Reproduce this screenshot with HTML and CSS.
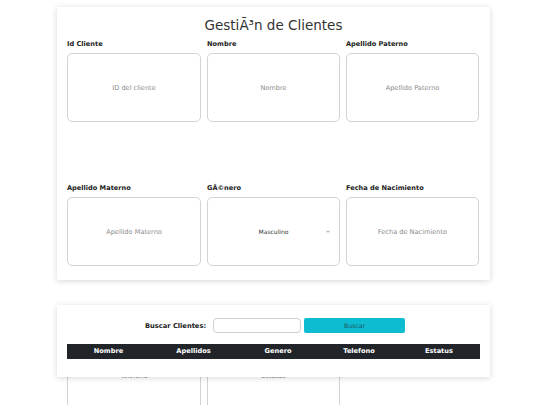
FILE: index.html
```html
<!DOCTYPE html>
<html lang="es">
<head>
<meta charset="utf-8">
<title>Gestión de Clientes</title>
<link rel="stylesheet" href="styles.css">
</head>
<body>
<div class="page">
  <section class="card form-card">
    <h1 class="title">GestiÃ³n de Clientes</h1>
    <div class="grid">
      <div class="field">
        <label class="label">Id Cliente</label>
        <div class="input"><span class="ph">ID del cliente</span></div>
      </div>
      <div class="field">
        <label class="label">Nombre</label>
        <div class="input"><span class="ph">Nombre</span></div>
      </div>
      <div class="field">
        <label class="label">Apellido Paterno</label>
        <div class="input"><span class="ph">Apellido Paterno</span></div>
      </div>
      <div class="field">
        <label class="label">Apellido Materno</label>
        <div class="input"><span class="ph">Apellido Materno</span></div>
      </div>
      <div class="field">
        <label class="label">GÃ©nero</label>
        <div class="input select"><span class="val">Masculino</span>
          <svg class="chev" viewBox="0 0 6 4" width="4" height="3"><path d="M0.6 0.8 L3 3.2 L5.4 0.8" fill="none" stroke="#666" stroke-width="1"/></svg>
        </div>
      </div>
      <div class="field">
        <label class="label">Fecha de Nacimiento</label>
        <div class="input"><span class="ph">Fecha de Nacimiento</span></div>
      </div>
      <div class="field">
        <label class="label">Telefono</label>
        <div class="input"><span class="ph">Telefono</span></div>
      </div>
      <div class="field">
        <label class="label">Estatus</label>
        <div class="input"><span class="ph">Estatus</span></div>
      </div>
    </div>
  </section>

  <section class="card search-card">
    <div class="search-row">
      <label class="search-label">Buscar Clientes:</label>
      <div class="search-input"></div>
      <button class="btn">Buscar</button>
    </div>
    <div class="thead">
      <div class="th">Nombre</div>
      <div class="th">Apellidos</div>
      <div class="th">Genero</div>
      <div class="th">Telefono</div>
      <div class="th">Estatus</div>
    </div>
  </section>
</div>
</body>
</html>
```

FILE: styles.css
```css
html, body {
  margin: 0;
  padding: 0;
  background: #ffffff;
  font-family: "DejaVu Sans", "Liberation Sans", sans-serif;
  color: #222;
}

.page {
  padding-top: 7px;
  width: 540px;
  height: 405px;
  overflow: hidden;
}

.card {
  background: #ffffff;
  margin-left: 57px;
  width: 433px;
  box-sizing: border-box;
  box-shadow: 0 1px 6px rgba(0, 0, 0, 0.16);
}

.form-card {
  height: 273px;
  padding: 8px 10px 0 10px;
}

.title {
  margin: 0 0 3px 0;
  font-weight: normal;
  font-size: 13.5px;
  line-height: 21px;
  text-align: center;
  color: #333;
}

.grid {
  display: grid;
  grid-template-columns: 134px 133px 133px;
  column-gap: 6px;
  row-gap: 61px;
}

.label {
  display: block;
  font-weight: bold;
  font-size: 6.6px;
  line-height: 11px;
  margin-bottom: 3px;
  color: #222;
}

.input {
  height: 69px;
  box-sizing: border-box;
  border: 1px solid #d4d4d4;
  border-radius: 5px;
  display: flex;
  align-items: center;
  justify-content: center;
  background: #fff;
  position: relative;
}

.ph {
  font-size: 6.6px;
  color: #8a8a8a;
}

.val {
  font-size: 6px;
  color: #333;
}

.chev {
  position: absolute;
  right: 9px;
  top: 32px;
}

.search-card {
  position: relative;
  z-index: 1;
  margin-top: 25px;
  height: 72px;
  padding: 13px 10px 0 10px;
}

.search-row {
  display: flex;
  justify-content: center;
  align-items: center;
  height: 15px;
  padding-left: 3px;
}

.search-label {
  font-weight: bold;
  font-size: 6.7px;
  color: #222;
  margin-right: 7px;
}

.search-input {
  width: 88px;
  height: 15px;
  box-sizing: border-box;
  border: 1px solid #cfcfcf;
  border-radius: 4px;
  margin-right: 3px;
}

.btn {
  width: 101px;
  height: 15px;
  border: none;
  border-radius: 2px;
  background: #0dbcd1;
  color: #1f5863;
  font-family: "DejaVu Sans", sans-serif;
  font-size: 6.2px;
  padding: 0;
}

.thead {
  margin-top: 11px;
  display: grid;
  grid-template-columns: 83px 87px 82px 80px 80px;
  height: 15px;
  background: #212529;
}

.th {
  color: #ffffff;
  font-weight: bold;
  font-size: 6.6px;
  line-height: 15px;
  text-align: center;
}
```
